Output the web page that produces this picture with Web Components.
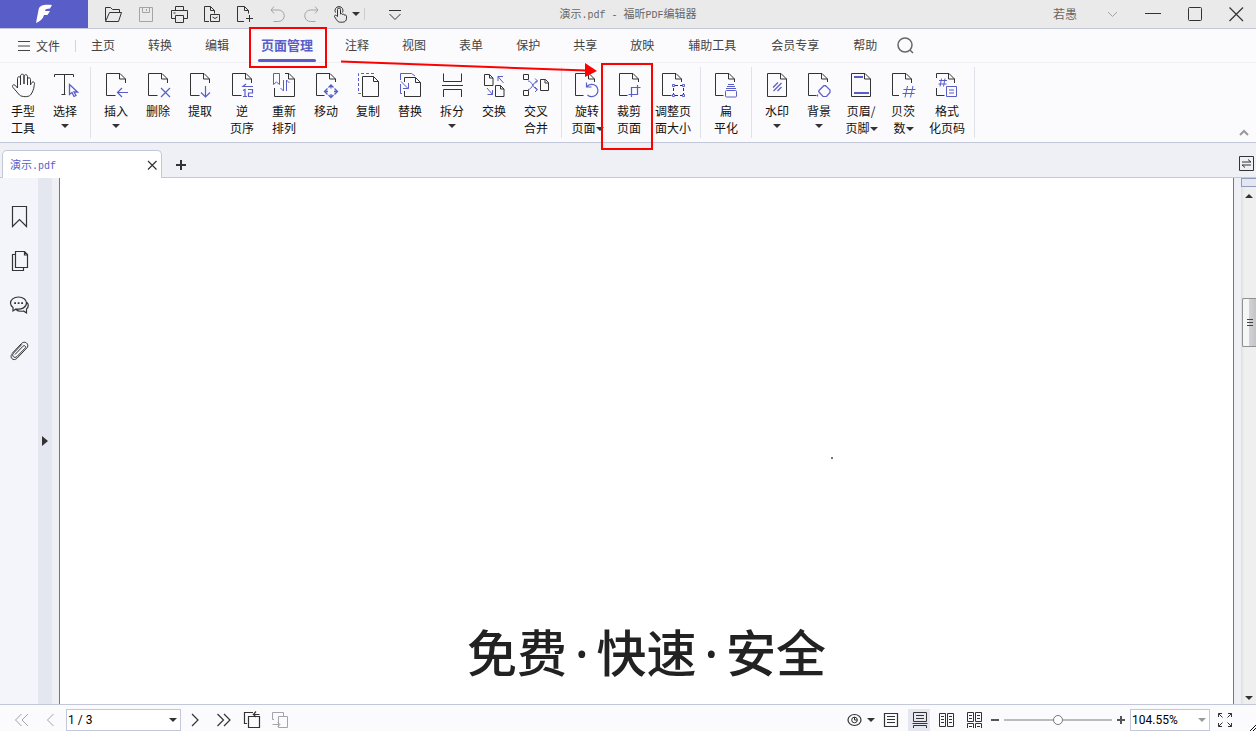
<!DOCTYPE html>
<html lang="zh-CN">
<head>
<meta charset="utf-8">
<title>演示.pdf - 福昕PDF编辑器</title>
<style>
  html, body { margin: 0; height: 100%; }
  body {
    --ink: #333333;
    --brand: #585dc8;
    --line: #c3c8d8;
    --panel: #fbfbfe;
    --band: #eff0f5;
    font: 12px/17px "Noto Sans CJK SC", sans-serif;
    color: #111;
    overflow: hidden;
  }
</style>
</head>
<body>
<pdf-editor></pdf-editor>
<script>
/* setup fills the fragment in before it is attached, so children connect with their attributes set. */
const define = (name, html, setup) => {
  const template = document.createElement('template');
  template.innerHTML = html;
  customElements.define(name, class extends HTMLElement {
    connectedCallback() {
      if (this.shadowRoot) return;
      const content = template.content.cloneNode(true);
      if (setup) setup(this, content);
      this.attachShadow({ mode: 'open' }).append(content);
    }
  });
};

/* ---------- icons: [box size, markup]; class b = brand colour, f = filled ---------- */
const SHEET = '<path d="M13.5 24.5h-9v-22H18L23.500 8v4M17.500 2.500V8h6"/>';
const FULL = '<path d="M4.500 2.500H18L23.500 8v17.500h-19zM17.500 2.500V8h6"/>';
const ICONS = {
  logo: [28, '<path class="w" d="M22 5C15 4.500 9.500 4.500 8.500 10L6 23c3-1 5.500-3 7-5.500l1-2.500h3.500l2.500-4h-5c.3-1.500 1.200-2 3-2.200l2-.3z"/>'],
  folder: [24, '<path d="M4.500 18.500v-13h5l2 2h7v3M4.500 19.500l4-9h12l-3 9z"/>'],
  save: [24, '<path d="M5.500 5.500h13v14h-13zM8.500 5.500v5h7v-5M12.500 7v2"/>'],
  print: [24, '<path d="M8.500 8.500v-4h8v4M8 16.500H4.500v-8h16v8H17M8.500 13.500h8v7h-8zM6.500 11h2"/>'],
  mail: [24, '<path d="M9 19.500H4.500v-15h6l4 4v3M10.500 4.500v4h4M10.500 12.500h9v7h-9zM12.500 15l2.500 1.500 2.500-1.500"/>'],
  newpage: [24, '<path d="M11 19.500H4.500v-15h7l4 4v3M11.500 4.500v4h4M16.500 13v7M13 16.500h7"/>'],
  undo: [24, '<path d="M8 4.500L5 8l3 3.500M5 8h7.500a5.700 5.700 0 0 1 0 11.500h-5"/>'],
  redo: [24, '<path d="M16 4.500L19 8l-3 3.500M19 8h-7.500a5.700 5.700 0 0 0 0 11.500h5"/>'],
  touch: [24, '<path d="M9.500 14.500v-7a1.500 1.500 0 0 1 3 0v4.500c1-.8 2-.3 2 .5 1-.6 2-.2 2 .7 1-.5 2 0 2 1v2c0 2.500-1.500 4-4 4h-2c-2 0-3-.8-4-2.500l-2-3c-.5-1.200 1-2 1.800-1.200l1.200 1M7.500 10.500a4 4 0 1 1 7 0"/>'],
  more: [24, '<path d="M6 8.500h12M6.500 12l5.500 5.500 5.500-5.500"/>'],
  down: [24, '<path d="M8 10l4.500 4.500L17 10"/>'],
  min: [24, '<path d="M4 11.500h16"/>'],
  max: [24, '<rect x="5.500" y="5.500" width="13" height="13" rx="1"/>'],
  close: [24, '<path stroke-width="1.200" d="M5.500 5.500l13.500 13.500M19 5.500L5.500 19"/>'],
  menu: [14, '<path d="M1 2.500h12M1 7h12M1 11.500h12"/>'],
  search: [20, '<circle cx="9" cy="9" r="7" stroke-width="1.500"/><path stroke-width="1.500" d="M14 14l3 3"/>'],
  hand: [28, '<path d="M8.500 17V7.500c0-2.400 3-2.400 3 0V14M11.500 13V5c0-2.400 3.500-2.400 3.500 0v8M15 13V5.500c0-2.400 3.500-2.400 3.500 0V14M18.500 13V8.500c0-2.300 3-2.300 3 0v5.500c1-2.500 2-3.500 3.200-3 1.300.6.800 2 .5 3.500-.5 4-1.700 7-3.700 9.500-2 2.200-8.500 2.200-11 0L4 16.500c-1.500-2 .5-3.500 2.200-2.200L8.500 17"/>'],
  select: [28, '<path d="M3.500 6V3.500h19V6M13.500 3.500v20M10.500 23.500h4"/><path class="b" stroke-width="1.300" d="M18.500 13.500v10l2.500-2 2 4 2-1-2-3.500h3.500z"/>'],
  insert: [28, SHEET + '<path class="b" stroke-width="1.200" d="M26 21.500H15.500M20 17l-4.500 4.500L20 26"/>'],
  remove: [28, SHEET + '<path class="b" stroke-width="1.200" d="M17 17l9 9M26 17l-9 9"/>'],
  extract: [28, SHEET + '<path class="b" stroke-width="1.200" d="M19.500 15v11M15 21.500l4.500 4.500 4.500-4.500"/>'],
  reverse: [28, SHEET + '<path class="b" stroke-width="1.200" d="M25 15.500H15l3-2.500M15 19.500l2-1v7M15 25.500h4M20 18.500h4.500V22H20.500v3.500H25"/>'],
  reorder: [28, '<path d="M4.500 17v8.500h20V8L19 2.500h-4M18.500 2.500V8h6"/><path class="b" d="M3.500 2.500h6v11l-3-2.500-3 2.500zM13.500 9v11L10.500 17M16.500 20V9l3 3"/>'],
  move: [28, '<path d="M12.500 24.500h-8v-22H18L23.500 8v3M17.500 2.500V8h6"/><path class="b" stroke-width="1.300" d="M16.500 16.500L19 14l2.500 2.500M16.500 24L19 26.500l2.500-2.500M15.500 17.500l-3 3 3 3M22.500 17.500l3 3-3 3M19 14.500v3M19 23v3M13 20.500h3M22 20.500h3"/>'],
  copy: [28, '<path d="M8.500 5.500h11l5 5v15h-16zM19.500 5.500v5h5"/><path class="b" stroke-dasharray="3 2" d="M7 22.500H4.500v-20h16V4"/>'],
  replace: [28, '<path d="M8.500 20v5.500h16V11.500l-5-5h-11V11M19.500 6.500v5h5"/><path class="b" d="M4.500 9V2.500h11L19 5M6 22.500H4.500V13M5 10.500l7 7M12.500 12v5.500H7"/>'],
  split: [28, '<path d="M5.500 2.500v8h18v-8M4 14.500h21M5.500 26v-7.500h18V26"/>'],
  swap: [28, '<path d="M4.500 3.500h5l3.500 3.500v7.500H4.500zM9.500 3.500V7H13M15.500 14.500h5l3.500 3.500v7.500h-8.500zM20.500 14.500V18H24"/><path class="b" d="M23.500 12L18 5.500M18 10V5.500h5M7 17l5.500 6.500M12.500 19v4.500H7.500"/>'],
  cross: [28, '<path d="M1.500 3.500h5v5h-5zM1.500 19.500h5v5h-5zM18.500 8.500h5l3 3v8h-8zM23 8.500v3.500h3.500"/><path class="b" d="M6 10c4-.5 5.500 8.500 9.500 8.500M6 18.500c4 .5 5.500-8.500 9.500-8.500M13 7.500l2.500 2.500-2.500 2.500M13 16l2.500 2.500L13 21"/>'],
  rotate: [28, '<path d="M10.500 24.500h-8v-22H16L21.500 8v3M15.500 2.500V8h6"/><path class="b" stroke-width="1.200" d="M14 15.500a6.200 6.200 0 1 1 .5 8.500M13.500 11.500V16h5"/>'],
  crop: [28, '<path d="M12.500 24.500h-8v-22H18L23.500 8v3M17.500 2.500V8h6"/><path class="b" stroke-width="1.200" d="M25.500 16.500h-9V26M13.500 23.500h9V14"/>'],
  resize: [28, '<path d="M12.500 24.500h-9v-22H17L22.500 8v3M16.500 2.500V8h6"/><path stroke-dasharray="3 2" d="M16 14.500h7M16 24.500h7M14.500 17v6M24.500 17v6"/><path class="b" d="M13.500 13.500h2v2h-2zM23.500 13.500h2v2h-2zM13.500 23.500h2v2h-2zM23.500 23.500h2v2h-2z"/>'],
  flatten: [28, '<path d="M11.500 24.500h-8v-22H17L22.500 8v3M16.500 2.500V8h6"/><path class="b" d="M16 13.500h6M15 15.500h8M14 17.500h10"/><rect class="b" x="13.500" y="19.500" width="11" height="6.500" rx="1"/>'],
  watermark: [28, FULL + '<path class="b" stroke-width="1.200" d="M10 16.500l5-5M10.500 20l8-8M14.500 20l4-4"/>'],
  background: [28, '<path d="M11.500 24.500h-8v-22H17L22.500 8v3M16.500 2.500V8h6"/><path class="b" stroke-width="1.200" d="M19 14.500l-5 5c-.5.500-.5 1 0 1.500l4 4.500h3.500l3.500-4v-2.500L20.500 14.500zM19 14.500l2.500 1M12.500 23.500v2"/>'],
  header: [28, FULL + '<path class="b" stroke-width="2" d="M7 6h9M7 22h15"/>'],
  bates: [28, '<path d="M10 24.500H3.500v-22H17L22.500 8v4M16.500 2.500V8h6"/><path class="b" d="M18.500 15L16 26.500M24 15l-2.500 11.500M14.500 18.500h12M13.500 22.500h12"/>'],
  pageno: [28, '<path d="M11.500 24.500h-8V17M3.500 7V2.500H16L21.500 8v4M15.500 2.500V8h6"/><path class="b" d="M8.500 7.500l-1.500 8M12 7.500l-1.500 8M6 9.500h8M5.500 13h8M13.500 15.500h10v10h-10zM16 19h5M16 22h5"/>'],
  swapview: [16, '<path d="M.5.500h14v14H.5zM3 6h9L9 3.500M12 9H3l3 2.500"/>'],
  tabclose: [16, '<path stroke-width="1.200" d="M4 4l8.500 8.500M12.500 4L4 12.500"/>'],
  plus: [16, '<path stroke-width="2" d="M8 3v10M3 8h10"/>'],
  bookmark: [24, '<path stroke-width="1.200" d="M5.500 2.500h14v20l-7-7-7 7z"/>'],
  pages: [24, '<path stroke-width="1.200" d="M8.500 2.500h9l3 3v13h-12zM17.500 2.500v3.500h3M8.500 5.500h-3v16h11v-3"/>'],
  comment: [24, '<path stroke-width="1.200" d="M11.500 3C6.500 3 3.500 6 3.500 9c0 2 1 3.500 2.500 4.500V17l3-2c6 1 10.500-2 10.500-6 0-3.500-3.500-6-8-6zM20 8.500c2 2 1.500 5-.5 6.500v4l-3-2c-3 .5-6 0-7.500-1.500"/><path stroke-width="1.800" d="M7.200 9.200h1.800M10.700 9.200h1.800M14.200 9.200H16"/>'],
  clip: [24, '<path d="M8 15.500l8-8.300c1.500-1.500 3.500.3 2 2l-8 8.300c-2.500 2.500-6-.8-3.500-3.400l8.500-8.800M5 14.500l9.500-10c3.500-3.500 8.500 1 5.300 4.500l-10 10.500c-3.300 3-7.500-.8-5-4.200"/>'],
  first: [20, '<path d="M9.500 4L3.500 10l6 6M16 4l-6 6 6 6"/>'],
  prev: [20, '<path d="M13.500 4l-6 6 6 6"/>'],
  next: [20, '<path stroke-width="1.200" d="M7 4l6 6-6 6"/>'],
  last: [20, '<path stroke-width="1.200" d="M4.500 4l6 6-6 6M11 4l6 6-6 6"/>'],
  back: [20, '<path stroke-width="1.200" d="M6 13.500H3.500v-11H12M18.500 4.500h-6l2.500-3M12.500 4.500L15 7M7.500 6.500h11v11h-11z"/>'],
  forward: [20, '<path d="M5 9.500H3.500v-7h11V6M9.500 6.500h9v11h-9zM3.500 14.500h7M8.500 12l2.500 2.500L8.500 17"/>'],
  eye: [20, '<ellipse cx="9.500" cy="10" rx="6.500" ry="5.500" stroke-width="1.200"/><circle cx="9.500" cy="10" r="2.800"/><path d="M9.500 7v3h3"/>'],
  single: [20, '<path stroke-width="1.200" d="M4.500 3.500h13v13h-13zM7 6.500h8M7 9.500h8M7 12.500h8"/>'],
  continuous: [20, '<path d="M4.500 2.500h13v9h-13zM7 5.500h8M7 8.500h8M3.500 13.500h15M4.500 18v-2.500h13V18"/>'],
  facing: [20, '<path d="M3.500 3.500h6v13h-6zM11.500 3.500h6v13h-6zM5 6.500h3M5 9.500h3M5 12.500h3M13 6.500h3M13 9.500h3M13 12.500h3"/>'],
  facingcont: [20, '<path d="M3.500 2.500h6v9h-6zM11.500 2.500h6v9h-6zM5 5.500h3M5 8.500h3M13 5.500h3M13 8.500h3M3.500 18v-4.500h6V18M11.500 18v-4.500h6V18M5 16.500h3M13 16.500h3"/>'],
  minus: [12, '<path stroke-width="2" d="M1 6h8"/>'],
  add: [12, '<path stroke-width="2" d="M2 6h8M6 2v8"/>'],
  full: [20, '<path d="M3.500 7V3.500H7M3.500 3.500l4 4M13 3.500h3.500V7M16.500 3.500l-4 4M3.500 13v3.500H7M3.500 16.500l4-4M13 16.500h3.500V13M16.500 16.500l-4-4"/>'],
  collapse: [12, '<path stroke-width="2" d="M2 8l4-4 4 4"/>'],
  grip: [6, '<path d="M0 6l6-6M3 6l3-3"/>'],
  play: [12, '<path class="f" d="M3 1l6 5-6 5z"/>']
};

define('ui-icon', `
  <style>
    :host { display: block; flex: none; }
    svg { display: block; fill: none; stroke: currentColor; }
    .b { stroke: var(--brand); }
    .f { fill: currentColor; stroke: none; }
    .w { fill: #fff; stroke: none; }
  </style><svg aria-hidden="true"></svg>`, (el, root) => {
  const [size, body] = ICONS[el.getAttribute('name')];
  const svg = root.querySelector('svg');
  svg.setAttribute('width', size);
  svg.setAttribute('height', size);
  svg.setAttribute('viewBox', `0 0 ${size} ${size}`);
  svg.innerHTML = body;
});

define('ui-caret', `
  <style>
    :host { display: inline-block; width: 0; border: 4px solid transparent; border-top-color: currentColor; border-bottom: 0; color: var(--ink); }
  </style>`);

/* Square button holding one icon; its width comes from --w. */
define('icon-button', `
  <style>
    :host { display: block; color: var(--ink); }
    button {
      display: flex; align-items: center; justify-content: center; gap: 2px;
      width: var(--w, 28px); height: 100%; padding: 0; border: 0; background: none; color: inherit;
    }
    :host([muted]) { color: #a4a4a8; }
    :host([tight]) button { gap: 0; }
    :host([pressed]) button { background: #e4e7f0 content-box; padding: 0 2px 0 4px; }
  </style>
  <button type="button"><ui-icon></ui-icon><slot></slot></button>`, (el, root) => {
  root.querySelector('ui-icon').setAttribute('name', el.getAttribute('icon'));
  root.querySelector('button').setAttribute('aria-label', el.getAttribute('label') || el.getAttribute('icon'));
});

define('title-bar', `
  <style>
    :host { display: grid; grid-template-columns: 1fr auto 1fr; height: 28px; background: #eaeaea; border-bottom: 1px solid var(--line); }
    div { display: flex; }
    .logo { width: 88px; margin-right: 8px; background: var(--brand); justify-content: center; }
    .quick { --w: 33px; }
    .rule { width: 1px; height: 12px; align-self: center; background: #ccc; margin: 0 13px 0 4px; }
    h1 { margin: 0; font-size: 11px; font-weight: 400; line-height: 27px; color: #666; white-space: nowrap; }
    .latin { font: 10px "Liberation Mono", monospace; white-space: pre; }
    .window { justify-content: flex-end; --w: 42px; }
    .user { line-height: 27px; color: #666; margin-right: 15px; }
    .edge { --w: 40px; }
  </style>
  <div class="quick">
    <div class="logo"><ui-icon name="logo"></ui-icon></div>
    <icon-button icon="folder" label="打开"></icon-button>
    <icon-button icon="save" label="保存" muted></icon-button>
    <icon-button icon="print" label="打印"></icon-button>
    <icon-button icon="mail" label="发送"></icon-button>
    <icon-button icon="newpage" label="新建"></icon-button>
    <icon-button icon="undo" label="撤销" muted></icon-button>
    <icon-button icon="redo" label="重做" muted></icon-button>
    <icon-button icon="touch" label="触摸模式" tight><ui-caret></ui-caret></icon-button>
    <span class="rule"></span>
    <icon-button icon="more" label="更多"></icon-button>
  </div>
  <h1>演示<span class="latin">.pdf - </span>福昕<span class="latin">PDF</span>编辑器</h1>
  <div class="window">
    <span class="user">若愚</span>
    <icon-button class="edge" icon="down" label="账户" muted></icon-button>
    <icon-button icon="min" label="最小化"></icon-button>
    <icon-button icon="max" label="最大化"></icon-button>
    <icon-button class="edge" icon="close" label="关闭"></icon-button>
  </div>`);

define('menu-item', `
  <style>
    :host { display: block; margin-right: 1px; }
    a { display: flex; flex-direction: column; justify-content: center; box-sizing: border-box; height: 100%; padding: 0 16px 2px; color: #444; text-decoration: none; white-space: nowrap; }
    :host([wide]) a { padding: 0 17px 2px; }
    :host([active]) a { position: relative; padding: 0 15px 2px; font-size: 13px; font-weight: 700; color: var(--brand); }
    :host([active]) a::after { content: ""; position: absolute; left: 12px; right: 12px; bottom: 0; height: 3px; border-radius: 2px; background: var(--brand); }
  </style>
  <a href="#"><slot></slot></a>`);

define('menu-bar', `
  <style>
    :host { display: flex; height: 33px; background: var(--panel); border-bottom: 1px solid #f0f0f4; align-items: stretch; }
    button { display: flex; align-items: center; gap: 5px; padding: 0 15px 0 17px; border: 0; background: none; font: inherit; color: #444; }
    .rule { width: 1px; height: 12px; align-self: center; background: #d4d4da; }
    nav { display: flex; margin-left: -1px; }
    icon-button { --w: 24px; color: #666; }
  </style>
  <button type="button"><ui-icon name="menu"></ui-icon>文件</button>
  <span class="rule"></span>
  <nav>
    <menu-item>主页</menu-item><menu-item>转换</menu-item><menu-item>编辑</menu-item>
    <menu-item active>页面管理</menu-item>
    <menu-item>注释</menu-item><menu-item>视图</menu-item><menu-item>表单</menu-item>
    <menu-item>保护</menu-item><menu-item>共享</menu-item><menu-item>放映</menu-item>
    <menu-item wide>辅助工具</menu-item><menu-item wide>会员专享</menu-item><menu-item>帮助</menu-item>
  </nav>
  <icon-button icon="search" label="搜索"></icon-button>`);

define('ribbon-button', `
  <style>
    :host { display: block; width: 42px; }
    :host([wide]) { width: 46px; }
    button {
      display: flex; flex-direction: column; align-items: center;
      width: 100%; height: 100%; padding: 8px 0 0; border: 0; background: none; font: inherit; color: inherit;
    }
    ui-icon { color: var(--ink); margin-bottom: 3px; }
    .label { white-space: nowrap; }
    ui-caret { display: none; }
    :host([caret="below"]) .below { display: block; margin-top: 5px; }
    :host([caret="inline"]) .inline { display: inline-block; vertical-align: 2px; margin-right: -1px; }
  </style>
  <button type="button"><ui-icon></ui-icon><span class="label"><slot></slot><ui-caret class="inline"></ui-caret></span><ui-caret class="below"></ui-caret></button>`,
  (el, root) => root.querySelector('ui-icon').setAttribute('name', el.getAttribute('icon')));

define('ribbon-group', `
  <style>
    :host { display: flex; padding: 0 4px; border-right: 1px solid #e0e2ea; margin: 4px 0; height: 71px; }
    :host(:first-of-type) { padding-left: 2px; }
    ::slotted(*) { margin-top: -4px; }
  </style><slot></slot>`);

define('ribbon-bar', `
  <style>
    :host { display: flex; height: 79px; background: var(--panel); border-bottom: 1px solid var(--line); }
    .fold { margin: auto 6px 3px auto; color: #999; --w: 12px; height: 12px; }
  </style>
  <ribbon-group>
    <ribbon-button icon="hand">手型<br>工具</ribbon-button>
    <ribbon-button icon="select" caret="below">选择</ribbon-button>
  </ribbon-group>
  <ribbon-group>
    <ribbon-button icon="insert" caret="below">插入</ribbon-button>
    <ribbon-button icon="remove">删除</ribbon-button>
    <ribbon-button icon="extract">提取</ribbon-button>
    <ribbon-button icon="reverse">逆<br>页序</ribbon-button>
    <ribbon-button icon="reorder">重新<br>排列</ribbon-button>
    <ribbon-button icon="move">移动</ribbon-button>
    <ribbon-button icon="copy">复制</ribbon-button>
    <ribbon-button icon="replace">替换</ribbon-button>
    <ribbon-button icon="split" caret="below">拆分</ribbon-button>
    <ribbon-button icon="swap">交换</ribbon-button>
    <ribbon-button icon="cross">交叉<br>合并</ribbon-button>
  </ribbon-group>
  <ribbon-group>
    <ribbon-button icon="rotate" caret="inline">旋转<br>页面</ribbon-button>
    <ribbon-button icon="crop">裁剪<br>页面</ribbon-button>
    <ribbon-button icon="resize" wide>调整页<br>面大小</ribbon-button>
  </ribbon-group>
  <ribbon-group>
    <ribbon-button icon="flatten">扁<br>平化</ribbon-button>
  </ribbon-group>
  <ribbon-group>
    <ribbon-button icon="watermark" caret="below">水印</ribbon-button>
    <ribbon-button icon="background" caret="below">背景</ribbon-button>
    <ribbon-button icon="header" caret="inline">页眉/<br>页脚</ribbon-button>
    <ribbon-button icon="bates" caret="inline">贝茨<br>数</ribbon-button>
    <ribbon-button icon="pageno" wide>格式<br>化页码</ribbon-button>
  </ribbon-group>
  <icon-button class="fold" icon="collapse" label="折叠功能区"></icon-button>`);

define('tab-strip', `
  <style>
    :host { display: flex; height: 34px; padding-top: 1px; align-items: flex-end; background: var(--band); box-shadow: inset 0 -1px var(--line); }
    .tab {
      display: flex; align-items: center; justify-content: space-between; box-sizing: border-box;
      width: 160px; height: 28px; margin-left: 2px; padding: 0 1px 0 7px;
      background: #fff; border: 1px solid var(--line); border-bottom: 0; border-radius: 5px 5px 0 0;
      font-size: 11px; color: var(--brand);
    }
    .latin { font: 10px "Liberation Mono", monospace; }
    icon-button { --w: 16px; height: 16px; }
    .add { margin: 0 auto 5px 11px; }
    .view { margin: 0 1px 6px 0; }
  </style>
  <div class="tab"><span>演示<span class="latin">.pdf</span></span><icon-button icon="tabclose" label="关闭标签"></icon-button></div>
  <icon-button class="add" icon="plus" label="新标签"></icon-button>
  <icon-button class="view" icon="swapview" label="切换视图"></icon-button>`);

define('side-rail', `
  <style>
    :host { display: flex; }
    nav { width: 38px; padding-top: 15px; background: #f4f5fa; box-sizing: border-box; --w: 38px; }
    nav icon-button { height: 45px; }
    .splitter { display: flex; width: 14px; background: #e4e7f0; --w: 14px; }
  </style>
  <nav>
    <icon-button icon="bookmark" label="书签"></icon-button>
    <icon-button icon="pages" label="页面"></icon-button>
    <icon-button icon="comment" label="注释"></icon-button>
    <icon-button icon="clip" label="附件"></icon-button>
  </nav>
  <div class="splitter"><icon-button icon="play" label="展开"></icon-button></div>`);

define('doc-page', `
  <style>
    :host {
      position: relative; display: flex; flex-direction: column; justify-content: flex-end; align-items: center;
      flex: 1; margin: 0 7px; background: #fff; border: 1px solid #777; border-width: 0 1px;
    }
    p { margin: 0 0 21px; font-size: 50px; line-height: 60px; font-weight: 500; color: #222; white-space: nowrap; }
    ::slotted(span) { font-family: "Noto Sans", sans-serif; padding: 0 8px; }
    .speck { position: absolute; left: calc(50% + 184px); top: 53%; width: 2px; height: 2px; background: #777; }
  </style>
  <p><slot></slot></p><span class="speck"></span>`);

define('scroll-bar', `
  <style>
    :host { display: flex; flex-direction: column; width: 15px; background: linear-gradient(90deg, #dedede, #efefef 3px); }
    .pane { height: 7px; border: 1px solid #8f9bbd; border-right: 0; background: #e4e7f0; }
    .end { display: flex; height: 18px; align-items: center; justify-content: center; color: #333; }
    .down { height: 12px; }
    .up ui-caret { transform: rotate(180deg); }
    .track { flex: 1; }
    .thumb {
      display: flex; align-items: center; justify-content: center; box-sizing: border-box;
      height: 49px; margin: 93px 0 0 1px; border: 1px solid #909090; border-right: 0; border-radius: 2px 0 0 2px;
      background: linear-gradient(90deg, #f6f6f6 45%, #d2d2d6 50%, #c4c4c8);
    }
    .thumb i { width: 6px; height: 8px; background: repeating-linear-gradient(#444 0 1px, transparent 1px 3px); }
  </style>
  <div class="pane"></div>
  <div class="end up"><ui-caret></ui-caret></div>
  <div class="track"><div class="thumb"><i></i></div></div>
  <div class="end down"><ui-caret></ui-caret></div>`);

define('combo-box', `
  <style>
    :host { display: flex; position: relative; width: var(--w); box-sizing: border-box; border: 1px solid var(--line); background: #fff; }
    select { appearance: none; width: 100%; padding: 0 0 0 1px; border: 0; background: none; font: 12px Roboto, sans-serif; color: #000; }
    ui-caret { position: absolute; right: 3px; top: 8px; pointer-events: none; }
    :host([muted]) ui-caret { color: #999; }
  </style>
  <select></select><ui-caret></ui-caret>`, (el, root) => {
  const select = root.querySelector('select');
  select.setAttribute('aria-label', el.getAttribute('label'));
  select.add(new Option(el.getAttribute('value')));
});

define('status-bar', `
  <style>
    :host { position: relative; display: flex; justify-content: space-between; height: 22px; padding: 4px 17px 0 8px; background: var(--panel); border-top: 1px solid var(--line); }
    div { display: flex; }
    .page { --w: 115px; margin-left: 2px; }
    .zoom { --w: 80px; margin-right: 1px; }
    .eye { --w: 32px; }
    .less { --w: 16px; color: #555; }
    .plus { --w: 18px; color: #555; }
    input { appearance: none; width: 108px; height: 22px; margin: 0; background: linear-gradient(#bbb, #bbb) center / 100% 2px no-repeat; }
    input::-webkit-slider-thumb { appearance: none; width: 10px; height: 10px; border: 1px solid #777; border-radius: 50%; background: #fff; box-sizing: border-box; }
    .grip { position: absolute; right: 0; bottom: 0; }
  </style>
  <div>
    <icon-button icon="first" label="第一页" muted></icon-button>
    <icon-button icon="prev" label="上一页" muted></icon-button>
    <combo-box class="page" value="1 / 3" label="页码"></combo-box>
    <icon-button icon="next" label="下一页"></icon-button>
    <icon-button icon="last" label="最后一页"></icon-button>
    <icon-button icon="back" label="后退"></icon-button>
    <icon-button icon="forward" label="前进" muted></icon-button>
  </div>
  <div>
    <icon-button class="eye" icon="eye" label="视图模式"><ui-caret></ui-caret></icon-button>
    <icon-button icon="single" label="单页"></icon-button>
    <icon-button icon="continuous" label="连续" pressed></icon-button>
    <icon-button icon="facing" label="双页"></icon-button>
    <icon-button icon="facingcont" label="连续双页"></icon-button>
    <icon-button class="less" icon="minus" label="缩小"></icon-button>
    <input type="range" value="50" aria-label="缩放">
    <icon-button class="plus" icon="add" label="放大"></icon-button>
    <combo-box class="zoom" value="104.55%" label="缩放比例" muted></combo-box>
    <icon-button icon="full" label="全屏"></icon-button>
  </div>
  <ui-icon class="grip" name="grip"></ui-icon>`);

/* Tutorial marks drawn over the window. */
define('guide-marks', `
  <style>
    :host { position: absolute; left: 0; top: 0; pointer-events: none; }
    svg { display: block; fill: none; stroke: #f00; stroke-width: 2; }
  </style>
  <svg width="660" height="152" aria-hidden="true">
    <rect x="250" y="28" width="76" height="39"/>
    <rect x="602" y="64" width="50" height="85"/>
    <path d="M341 61.500L586 70.500"/>
    <path fill="#f00" stroke="none" d="M585 63l12 8-12 6z"/>
  </svg>`);

define('pdf-editor', `
  <style>
    :host { position: relative; display: flex; flex-direction: column; height: 100vh; background: var(--band); }
    main { display: flex; flex: 1; min-height: 0; }
  </style>
  <title-bar></title-bar>
  <menu-bar></menu-bar>
  <ribbon-bar></ribbon-bar>
  <tab-strip></tab-strip>
  <main>
    <side-rail></side-rail>
    <doc-page>免费<span>·</span>快速<span>·</span>安全</doc-page>
    <scroll-bar></scroll-bar>
  </main>
  <status-bar></status-bar>
  <guide-marks></guide-marks>`);
</script>
</body>
</html>
